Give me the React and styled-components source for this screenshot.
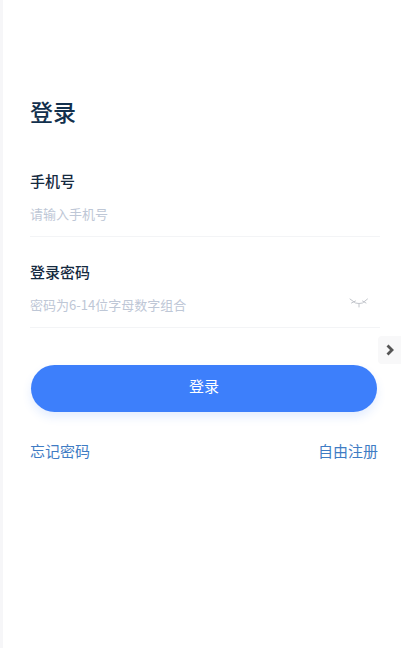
import React from 'react'
import styled, { createGlobalStyle } from 'styled-components'

const GlobalStyle = createGlobalStyle`
    html, body {
        margin: 0;
        padding: 0;
        background: #fff;
    }
    body {
        font-family: "Noto Sans CJK SC", "Noto Sans", sans-serif;
    }
`

const Page = styled.div`
    position: relative;
    width: 401px;
    height: 648px;
    overflow: hidden;
    box-sizing: border-box;
    border-left: 3px solid #f6f6f8;
    padding: 96px 21px 0 27px;
    background: #fff;
`

const Title = styled.h1`
    margin: 0 0 45px;
    height: 30px;
    line-height: 30px;
    font-size: 23px;
    font-weight: 500;
    color: #12304d;
`

const Field = styled.div`
    height: 65px;
    margin-bottom: 25px;
    border-bottom: 1px solid #f3f4f6;
`

const Label = styled.div`
    height: 20px;
    line-height: 20px;
    font-size: 15px;
    font-weight: 500;
    color: #152a3f;
    margin-bottom: 13px;
`

const InputRow = styled.div`
    display: flex;
    align-items: center;
    justify-content: space-between;
    height: 20px;
    padding-right: 11px;
`

const Placeholder = styled.span`
    font-size: 13px;
    line-height: 20px;
    color: #bec7d6;
`

const SubmitButton = styled.button`
    display: block;
    width: 346px;
    height: 47px;
    margin: 37px 0 0 1px;
    padding: 0 0 6px;
    border: 0;
    border-radius: 24px;
    background: #3d7ffb;
    box-shadow: 0 5px 10px rgba(61, 127, 251, 0.14);
    color: #fff;
    font-family: inherit;
    font-size: 15px;
    font-weight: 400;
`

const Links = styled.div`
    display: flex;
    justify-content: space-between;
    margin-top: 29px;
    padding-right: 2px;
`

const LinkText = styled.a`
    font-size: 15px;
    font-weight: 400;
    line-height: 20px;
    color: #3f7cc4;
`

const SideHandle = styled.div`
    position: absolute;
    right: 0;
    top: 336px;
    width: 23px;
    height: 28px;
    display: flex;
    align-items: center;
    justify-content: center;
    background: #f8f8f9;
    border-radius: 4px 0 0 4px;
`

const ClosedEye = () => (
    <svg width="20" height="14" viewBox="0 0 20 14" fill="none" stroke="#c2c5cb" strokeWidth="1" strokeLinecap="round">
        <path d="M1 1L6.5 5Q10 6 13.5 5L18.5 1" />
        <path d="M2.5 5L6.5 3M17 5L13.5 3M10 6V9" />
    </svg>
)

const Chevron = () => (
    <svg width="10" height="12" viewBox="0 0 10 12" fill="none" stroke="#555" strokeWidth="2.8">
        <path d="M2.5 1.5L7 6L2.5 10.5" />
    </svg>
)

export default function App() {
    return (
        <>
            <GlobalStyle />
            <Page>
                <Title>登录</Title>
                <Field>
                    <Label>手机号</Label>
                    <InputRow>
                        <Placeholder>请输入手机号</Placeholder>
                    </InputRow>
                </Field>
                <Field>
                    <Label>登录密码</Label>
                    <InputRow>
                        <Placeholder>密码为6-14位字母数字组合</Placeholder>
                        <ClosedEye />
                    </InputRow>
                </Field>
                <SubmitButton>登录</SubmitButton>
                <Links>
                    <LinkText>忘记密码</LinkText>
                    <LinkText>自由注册</LinkText>
                </Links>
                <SideHandle>
                    <Chevron />
                </SideHandle>
            </Page>
        </>
    )
}
